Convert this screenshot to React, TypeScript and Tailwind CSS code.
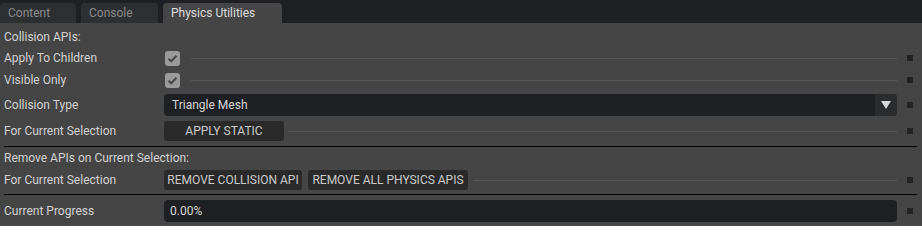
import React from "react";

const Square = () => <div className="ml-[10px] h-[6px] w-[6px] shrink-0 bg-[#232323]" />;

const Line = ({ className = "" }: { className?: string }) => (
  <div className={`h-px flex-1 bg-[#575757] ${className}`} />
);

const Check = () => (
  <div className="ml-px flex h-[15px] w-[15px] shrink-0 items-center justify-center rounded-[3px] bg-[#9a9a9a]">
    <svg width="11" height="11" viewBox="0 0 11 11">
      <path d="M1.5 5.8 L4.2 8.3 L9.5 2.8" fill="none" stroke="#474747" strokeWidth="2" />
    </svg>
  </div>
);

const Row = ({
  label,
  h,
  children,
}: {
  label: string;
  h: string;
  children: React.ReactNode;
}) => (
  <div className={`flex items-center pl-1 pr-[9px] ${h}`}>
    <div className="w-[160px] shrink-0">{label}</div>
    <div className="flex flex-1 items-center">{children}</div>
    <Square />
  </div>
);

const Btn = ({ label, w, className = "" }: { label: string; w: string; className?: string }) => (
  <div
    className={`flex h-[20px] shrink-0 items-center justify-center whitespace-nowrap rounded-[3px] bg-[#2a2a2a] text-[#cacaca] ${w} ${className}`}
  >
    {label}
  </div>
);

export default function App() {
  return (
    <div
      className="h-[226px] w-[922px] overflow-hidden bg-[#454545] text-[12px] text-[#d2d2d2]"
      style={{ fontFamily: 'Roboto, "Liberation Sans", Arial, sans-serif' }}
    >
      <div className="flex h-[23px] items-end gap-[5px] bg-[#1f2023]">
        <div className="flex h-[20px] w-[76px] items-center rounded-t-[4px] bg-[#2e2f31] pl-2 text-[#8b8b8b]">
          Content
        </div>
        <div className="flex h-[20px] w-[77px] items-center rounded-t-[4px] bg-[#2e2f31] pl-2 text-[#8b8b8b]">
          Console
        </div>
        <div className="flex h-[20px] w-[119px] items-center rounded-t-[4px] bg-[#454545] pl-2 text-[#dcdcdc]">
          Physics Utilities
        </div>
      </div>

      <div className="flex h-[24px] items-center pl-1 pt-[4px]">Collision APIs:</div>

      <Row label="Apply To Children" h="h-[22px]">
        <Check />
        <Line className="ml-[11px]" />
      </Row>
      <Row label="Visible Only" h="h-[22px]">
        <Check />
        <Line className="ml-[11px]" />
      </Row>
      <Row label="Collision Type" h="h-[28px]">
        <div className="flex h-[22px] flex-1 overflow-hidden rounded-[4px] bg-[#1f2023]">
          <div className="flex flex-1 items-center pl-2 text-[#d6d6d6]">Triangle Mesh</div>
          <div className="flex w-[22px] items-center justify-center bg-[#2b2c2e]">
            <svg width="10" height="8" viewBox="0 0 10 8">
              <path d="M0 0 H10 L5 8 Z" fill="#d8d8d8" />
            </svg>
          </div>
        </div>
      </Row>
      <Row label="For Current Selection" h="h-[24px]">
        <Btn label="APPLY STATIC" w="w-[120px]" />
        <Line className="ml-1" />
      </Row>

      <div className="ml-1 mr-[5px] mt-[3px] h-px bg-black" />

      <div className="flex h-[22px] items-center pl-1">Remove APIs on Current Selection:</div>

      <Row label="For Current Selection" h="h-[22px]">
        <Btn label="REMOVE COLLISION API" w="w-[138px]" />
        <Btn label="REMOVE ALL PHYSICS APIS" w="w-[160px]" className="ml-[6px]" />
        <Line className="ml-[5px]" />
      </Row>

      <div className="ml-1 mr-[5px] mt-[3px] h-px bg-black" />

      <Row label="Current Progress" h="h-[31px]">
        <div className="flex h-[22px] flex-1 items-center rounded-[4px] bg-[#1f2023] pl-[6px] text-[#d6d6d6]">
          0.00%
        </div>
      </Row>
    </div>
  );
}
